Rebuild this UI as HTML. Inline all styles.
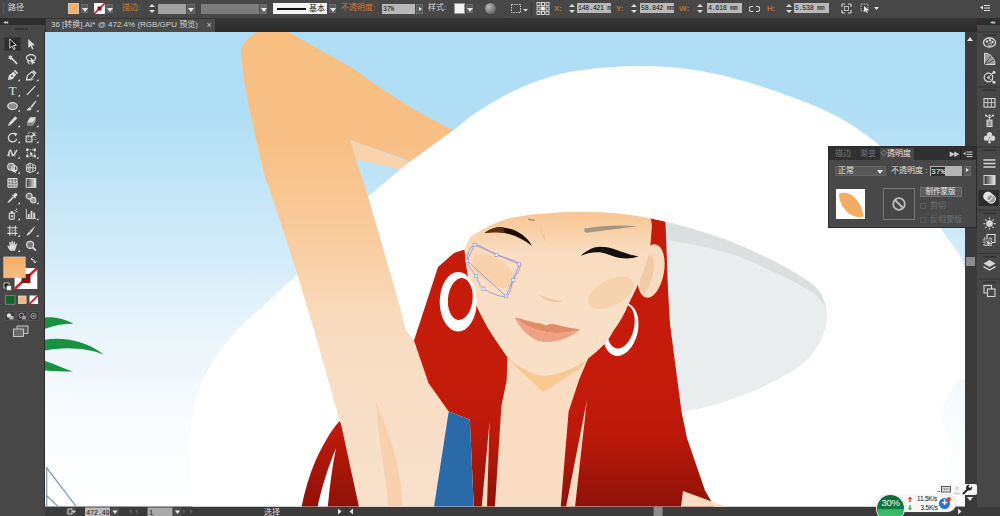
<!DOCTYPE html>
<html lang="zh">
<head>
<meta charset="utf-8">
<title>36 [转换].AI* @ 472.4% (RGB/GPU 预览)</title>
<style>
html,body{margin:0;padding:0;}
body{width:1000px;height:516px;overflow:hidden;background:#474747;position:relative;
 font-family:"Liberation Sans","Noto Sans CJK SC",sans-serif;font-size:9px;color:#d6d6d6;}
.abs{position:absolute;}
#art{position:absolute;left:0;top:0;}
.t{position:absolute;white-space:nowrap;line-height:1;}
.fld{position:absolute;background:#b9b9b9;color:#1a1a1a;font-family:"Liberation Mono","Noto Sans CJK SC",monospace;font-size:6.700px;letter-spacing:-0.350px;line-height:10px;white-space:nowrap;overflow:hidden;padding-left:1px;color:#111;box-sizing:border-box;}
.dd{position:absolute;background:#5a5a5a;border:1px solid #6a6a6a;box-sizing:border-box;}
.dd:after{content:"";position:absolute;left:50%;top:50%;margin:-1px 0 0 -3px;border:3px solid transparent;border-top:4px solid #e6e6e6;border-bottom:0;}
.or{color:#cf7d33;}
</style>
</head>
<body>

<!-- ================= ARTWORK ================= -->
<svg id="art" width="1000" height="516" viewBox="0 0 1000 516">
<defs>
 <clipPath id="cv"><rect x="45" y="32" width="920" height="474.5"/></clipPath>
 <linearGradient id="sky" x1="0" y1="32" x2="0" y2="506" gradientUnits="userSpaceOnUse">
  <stop offset="0" stop-color="#aeddf5"/><stop offset="0.165" stop-color="#afdef5"/><stop offset="0.31" stop-color="#c0e4f7"/><stop offset="0.475" stop-color="#d4ecf9"/><stop offset="0.64" stop-color="#eaf5fb"/><stop offset="0.81" stop-color="#f8fbfe"/><stop offset="1" stop-color="#ffffff"/>
 </linearGradient>
 <linearGradient id="arm" x1="0" y1="32" x2="0" y2="506" gradientUnits="userSpaceOnUse">
  <stop offset="0" stop-color="#f8bf81"/><stop offset="0.24" stop-color="#f8c086"/><stop offset="0.41" stop-color="#f8ca9a"/><stop offset="0.576" stop-color="#f8d8b8"/><stop offset="0.66" stop-color="#f8ddc2"/><stop offset="1" stop-color="#f8e0cb"/>
 </linearGradient>
 <linearGradient id="face" x1="0" y1="212" x2="0" y2="300" gradientUnits="userSpaceOnUse">
  <stop offset="0" stop-color="#f8c692"/><stop offset="0.45" stop-color="#f9dcbf"/><stop offset="1" stop-color="#f9dfc6"/>
 </linearGradient>
 <linearGradient id="hair" x1="0" y1="380" x2="0" y2="506" gradientUnits="userSpaceOnUse">
  <stop offset="0" stop-color="#c41b0a"/><stop offset="0.45" stop-color="#bb190a"/><stop offset="1" stop-color="#8f1209"/>
 </linearGradient>
</defs>
<g clip-path="url(#cv)">
 <rect x="45" y="32" width="920" height="475" fill="url(#sky)"/>
 <!-- palm leaves -->
 <path d="M45 317.400 C55 316.500 65 319 73.500 323.700 C64 323.500 54 325.500 45 328.700 Z" fill="#1a9140"/>
 <path d="M45 339.800 C52 338.500 60 338.400 68 339.500 C82 341.500 94 347 103.600 354.600 C92 349.500 80 348.500 68 348.200 C60 348.200 52 349.200 45 350.400 Z" fill="#1a9140"/>
 <path d="M45 361 C50 362.500 56 365 61 367 C65 368.800 69 370.500 73 371.600 C64 371.500 54 371.200 45 370.500 Z" fill="#1a9140"/>
 <!-- boat lines -->
 <path d="M46.700 467 L46.700 507 M46 467 L77 507.500 M47 496 L59 507.500" stroke="#86a0b2" stroke-width="1.300" fill="none"/>

 <!-- hat (white) -->
 <path id="hatw" d="M454.0 130.0 C458.3 126.7 469.0 117.0 480.0 110.0 C491.0 103.0 506.7 94.0 520.0 88.0 C533.3 82.0 546.7 77.3 560.0 74.0 C573.3 70.7 586.7 69.3 600.0 68.0 C613.3 66.7 626.7 66.0 640.0 66.0 C653.3 66.0 666.7 66.5 680.0 68.0 C693.3 69.5 706.7 71.8 720.0 74.8 C733.3 77.8 746.7 81.8 760.0 86.0 C773.3 90.2 786.7 94.7 800.0 100.0 C813.3 105.3 826.7 110.3 840.0 118.0 C853.3 125.7 867.5 134.7 880.0 146.0 C892.5 157.3 904.9 172.3 915.0 186.0 C925.1 199.7 933.1 216.5 940.5 228.0 C947.9 239.5 955.2 247.7 959.5 255.0 C963.8 262.3 964.9 269.2 966.0 272.0 L966 380 C964.7 380.0 961.0 377.0 958.0 380.0 C955.0 383.0 951.0 392.2 948.0 398.0 C945.0 403.8 940.3 409.7 940.0 415.0 C939.7 420.3 944.2 424.8 946.0 430.0 C947.8 435.2 950.5 440.7 951.0 446.0 C951.5 451.3 950.3 457.0 949.0 462.0 C947.7 467.0 944.2 468.5 943.0 476.0 C941.8 483.5 942.2 501.8 942.0 507.0 L192 507 C191.5 498.8 188.7 474.5 189.0 458.0 C189.3 441.5 190.5 423.4 194.0 408.0 C197.5 392.6 202.3 379.0 210.0 365.5 C217.7 352.0 230.9 337.1 240.0 327.0 C249.1 316.9 256.2 312.7 264.5 305.0 C272.8 297.3 284.1 286.3 290.0 281.0 C295.9 275.7 298.3 274.3 300.0 273.0 L368 196.500 Z" fill="#ffffff"/>
 <!-- gray under brim -->
 <path d="M667.0 221.8 C672.5 223.3 688.8 227.6 699.8 231.0 C710.8 234.4 721.8 238.1 733.0 242.5 C744.2 246.9 755.0 251.7 766.8 257.6 C778.6 263.5 794.7 272.1 803.6 277.9 C812.5 283.7 816.4 286.8 820.2 292.6 C824.0 298.4 826.2 305.4 826.5 312.8 C826.8 320.2 825.8 328.5 822.0 336.8 C818.2 345.1 812.8 354.5 803.6 362.5 C794.4 370.5 779.1 378.5 766.8 384.6 C754.5 390.8 741.1 395.5 730.0 399.4 C718.9 403.3 708.2 406.0 700.0 408.0 C691.8 410.0 684.2 411.0 681.0 411.6 L660 330 Z" fill="#dcdfdf"/>
 <path d="M667.0 240.0 C672.5 241.0 688.8 243.6 699.8 246.0 C710.8 248.4 721.8 250.7 733.0 254.5 C744.2 258.3 755.0 263.3 766.8 268.7 C778.6 274.1 794.9 282.0 803.6 287.0 C812.3 292.0 815.3 294.2 819.0 298.5 C822.7 302.8 825.5 306.6 826.0 313.0 C826.5 319.4 825.7 328.6 822.0 336.8 C818.3 345.1 812.8 354.5 803.6 362.5 C794.4 370.5 779.1 378.5 766.8 384.6 C754.5 390.8 741.1 395.5 730.0 399.4 C718.9 403.3 708.2 406.0 700.0 408.0 C691.8 410.0 684.2 411.0 681.0 411.6 L660 330 Z" fill="#eaeded"/>

 <!-- upper arm & forearm -->
 <path d="M258 32 C248 37 241 44 241 53 C242 62 243 72 244 80 L249.500 110 L256 140 L264.500 175 L276.500 210 L296 270 L314 330 L339.500 420 L357.500 507 L437 507 L449 411 L428 380.500 L415 341 L406 330 L399.500 305 L390.500 270 L381.500 240 L372.500 210 L362 178 L350 140 L410 161 L407 164 L453.500 130 L440 123.500 L410 107 L380 87.500 L350 66.500 L320 50 L288.500 32 Z" fill="url(#arm)"/>
 <path d="M350 140 L410.500 162.500 L400 169.200 L356.200 159.500 Z" fill="#f9d3ab"/>
 <!-- white hat over the arm -->
 <path d="M453.500 130 L407 164 L368 196.500 L399.500 305 L406 330 L415 341 L470 300 L700 180 L600 90 Z" fill="#ffffff"/>

 <!-- chest / neck skin -->
 <path d="M490 340 L600 340 L600 507 L480 507 Z" fill="#f9dcc1"/>
 <!-- neck shadow -->
 <path d="M507 357 C520 368 532 374 543.300 376 C560 374 574 368 586 360 L582 367 L543.300 391.700 L509.700 361 Z" fill="#f8c892"/>
 <!-- main hair -->
 <path d="M464.500 249.500 L454 253 L438 267 L414 340.500 L428.500 383 L448.700 411.600 L469.800 419.500 L473.800 507 L494.900 507 L501.400 406 L506.700 380 L507.300 357 L488 328 L476 304 Z" fill="url(#hair)"/>
 <path d="M489.600 420.800 L481.700 507 L487 507 Z" fill="#f9dcc1"/>
 <!-- right hair -->
 <path d="M649 218 L665.500 221.500 L668 290 L670 324 L681.500 411.600 L687 438 L705 490.500 L714.500 507 L560.700 507 L568.600 411.600 L579 380 L588.700 357 L605.800 342.500 L628 305 L640 240 Z" fill="url(#hair)"/>
 <path d="M587 399.800 L566 507 L575 507 Z" fill="#f9dcc1"/>
 <path d="M683 491 L727 507 L681 507 Z" fill="#f9dcc1"/>
 <!-- blue garment -->
 <path d="M448.700 411.600 L469.800 419.500 L473.800 507 L434 507 Z" fill="#2a6aa8"/>
 <!-- armpit fold -->
 <path d="M375.600 400.300 C379 408 382 416 384.600 423.800 C389 435 392.500 446 395.400 456 C399 470 401.500 488 402.600 507 L388.200 507 C387.500 495 386 484 384.600 474 C383 462 381 450 379.200 438 C378 426 377 413 375.600 400.300 Z" fill="#f7d1ad"/>

 <!-- right earring (behind face) -->
 <g transform="rotate(13 621 329)"><ellipse cx="621" cy="329.500" rx="17" ry="27" fill="#ffffff"/><ellipse cx="620.500" cy="326.500" rx="13" ry="22.500" fill="#c41b0a"/></g>
 <!-- ear -->
 <ellipse cx="651" cy="271" rx="13" ry="27" fill="#f9dcc0" transform="rotate(10 651 271)"/>
 <ellipse cx="647" cy="274" rx="6" ry="19" fill="#f1cba8" transform="rotate(12 647 274)"/>
 <!-- face -->
 <path d="M464.500 249.500 C466 270 470 290 476 304 C479 312 484 321 488 328 C494 338 501 348 507.300 357 C518 367 531 374 543.300 376 C558 375 572 369 584 361.700 C592 356 599 350 605.800 342.500 C609 339 611 335 613 331.600 C620 322 625 313 628 305 C636 290 645 270 650 250 L652 225 L649 210 L560 205 L480 215 Z" fill="url(#face)"/>
 <!-- nose -->
 <path d="M538.900 294.500 C545 298 554 300 563 301 C556 303.500 545 302 538.900 294.500 Z" fill="#f2c59b"/>
 <path d="M538.500 223 C542 229 544.500 236 546.500 243 C542.500 238 539.500 231 538.500 223 Z" fill="#f6c894"/><path d="M543 222 C546 227 548 232 549.500 238 C546.500 234 544 228 543 222 Z" fill="#f7cfa2"/>
 <!-- blush -->
 <ellipse cx="611" cy="292.700" rx="25" ry="13" fill="#f5d3ae" transform="rotate(-27 611 292.700)"/>
 <ellipse cx="493.500" cy="271" rx="24" ry="12.500" fill="#f7d2aa" transform="rotate(33 493.500 271)"/>
 <!-- lips -->
 <path d="M514.500 317.200 C522 319 530 321.500 536 323 C540 322.500 543 324.500 545.700 325.600 C549 324 552 323.500 555.300 324.400 C564 326.500 572 328.500 580.500 329.200 C570 333 556 334 545.700 331.700 C534 330 522 324 514.500 317.200 Z" fill="#e18b69"/>
 <path d="M514.500 317.200 C522 324 534 330 545.700 331.700 C556 334 570 333 580.500 329.200 C570 338 556 342.500 543.300 342 C531 340 520 329 514.500 317.200 Z" fill="#eea283"/>
 <!-- eyes -->
 <path d="M484.500 233 C490 228.500 497 226.800 503 227.500 C516 229 527 236 532 246 C524 239.500 514 234.500 503 232.800 C496 232 490 232.300 484.500 233 Z" fill="#1d0d06"/>
 <path d="M484.500 233 C490 228.500 497 226.800 503 227.500 L505 233.100 C496 232 490 232.300 484.500 233 Z" fill="#5c2e0e"/>
 <path d="M580.500 256 C587 250 594 246.800 600 246.800 C606 246.800 611 248 616 249.800 C623 252.300 630 255 638.500 256.500 C633 258.500 626 259 620 258 C613 256.800 607 253.500 600 252.300 C593 251.800 586 253.300 580.500 256 Z" fill="#14100e"/>
 <!-- brows -->
 <path d="M584.500 228.500 C600 225.800 620 224.800 637.400 226.200 C622 228.300 602 230.500 586 232.800 C584 232 583.800 230 584.500 228.500 Z" fill="#a39782"/>
 <path d="M528 218.500 L535 219.500 L534.500 221 L528 220 Z" fill="#a8967c"/>
 <!-- left earring -->
 <ellipse cx="458.200" cy="301.800" rx="18.500" ry="29.800" fill="#ffffff"/>
 <ellipse cx="460.300" cy="299" rx="12.300" ry="21" fill="#c41b0a" transform="rotate(6 460.300 299)"/>
 <!-- hat lower edge over the forehead -->
 <path d="M435 264 L457 247.200 C466 240 474 234 483.600 229 C492 224.500 500 221 510 218 C522 215.500 534 214 546 213.400 C558 212.300 570 212 582 212 C594 212 606 212.500 618 213.400 C629 214.500 640 216 649.400 218 L666 221.800 L700 180 L600 100 L420 160 Z" fill="#ffffff"/>
 <!-- selection outline -->
 <g fill="none" stroke="#8d8fdc" stroke-width="0.800">
  <path d="M474.5 244.8 L519.3 264.3 L506.0 296.3 L467.2 260.8 Z"/>
  <path d="M474.5 244.8 C479.4 243.8 489.0 251.6 496.5 254.8 C504.0 258.1 516.5 260.1 519.3 264.3 C522.1 268.5 515.5 274.7 513.3 280.0 C511.1 285.3 511.0 294.9 506.0 296.3 C501.0 297.8 488.4 292.1 483.4 288.7 C478.4 285.3 478.8 280.6 476.1 276.0 C473.4 271.4 467.5 266.0 467.2 260.8 C466.9 255.6 469.6 245.8 474.5 244.8 Z"/>
 </g>
 <g fill="#ffffff" stroke="#8d8fdc" stroke-width="0.700">
  <rect x="473.0" y="243.3" width="3" height="3"/><rect x="495.0" y="253.3" width="3" height="3"/><rect x="517.8" y="262.8" width="3" height="3"/><rect x="511.8" y="278.5" width="3" height="3"/><rect x="504.5" y="294.8" width="3" height="3"/><rect x="481.9" y="287.2" width="3" height="3"/><rect x="474.6" y="274.5" width="3" height="3"/><rect x="465.7" y="259.3" width="3" height="3"/>
 </g>
 <!-- hair left of arm -->
 <path d="M339.500 421 C330 432 322 446 315 462 C309 476 304.500 492 301.500 507 L359 507 L341 424 Z" fill="url(#hair)"/>
 <path d="M336 448 C329 465 322 486 317.500 507 L327.800 507 C329.500 488 332 468 336 448 Z" fill="#ffffff"/>
</g>
</svg>


<!-- ================= TOP CONTROL BAR ================= -->
<div class="abs" id="ctrl" style="left:0;top:0;width:1000px;height:18px;background:#474747;">
 <div class="abs" style="left:3px;top:3px;width:1px;height:11px;background:#5c5c5c;"></div>
 <span class="t" style="left:8px;top:4px;font-size:8px;color:#dadada;">路径</span>
 <div class="abs" style="left:68px;top:3px;width:11px;height:11px;background:#f6b06a;border:1px solid #c8c8c8;box-sizing:border-box;"></div>
 <div class="dd" style="left:81px;top:4px;width:7px;height:9px;"></div>
 <svg class="abs" style="left:94px;top:3px;" width="11" height="11" viewBox="0 0 11 11"><rect width="11" height="11" fill="#fff"/><path d="M0 11 L11 0" stroke="#d2202a" stroke-width="1.600"/><rect x="3.500" y="3.500" width="4" height="4" fill="#7a1a1a"/></svg>
 <div class="dd" style="left:106px;top:4px;width:7px;height:9px;"></div>
 <span class="t or" style="left:122px;top:4px;font-size:8px;">描边:</span>
 <div class="abs" style="left:149px;top:3px;width:6px;height:11px;"><div class="abs" style="left:0;top:1px;border:3px solid transparent;border-bottom:3px solid #ddd;border-top:0;"></div><div class="abs" style="left:0;top:7px;border:3px solid transparent;border-top:3px solid #ddd;border-bottom:0;"></div></div>
 <div class="abs" style="left:158px;top:4px;width:28px;height:10px;background:#a2a2a2;"></div>
 <div class="dd" style="left:187px;top:4px;width:8px;height:10px;"></div>
 <div class="abs" style="left:201px;top:4px;width:58px;height:10px;background:#7c7c7c;"></div>
 <div class="dd" style="left:260px;top:4px;width:7px;height:10px;background:#666;"></div>
 <div class="abs" style="left:273px;top:3px;width:54px;height:11px;background:#f4f4f4;"><div class="abs" style="left:3.500px;top:4.500px;width:29.500px;height:2px;background:#111;"></div><span class="t" style="left:36px;top:1.500px;font-size:8px;color:#222;">基本</span></div>
 <div class="dd" style="left:329px;top:4px;width:7px;height:9px;"></div>
 <span class="t or" style="left:341px;top:4px;font-size:8px;">不透明度:</span>
 <div class="fld" style="left:382px;top:4px;width:33px;height:10px;">37%</div>
 <div class="abs" style="left:416px;top:4px;width:7px;height:10px;background:#5a5a5a;border:1px solid #6a6a6a;box-sizing:border-box;"><div class="abs" style="left:1.500px;top:1.500px;border:2.500px solid transparent;border-left:3px solid #e6e6e6;border-right:0;"></div></div>
 <span class="t" style="left:428px;top:4px;font-size:8px;color:#dadada;">样式:</span>
 <div class="abs" style="left:454px;top:3px;width:11px;height:11px;background:#f2f2f2;border:1px solid #999;box-sizing:border-box;"></div>
 <div class="dd" style="left:466px;top:4px;width:7px;height:9px;"></div>
 <div class="abs" style="left:485px;top:3px;width:11px;height:11px;border-radius:50%;background:radial-gradient(circle at 35% 35%,#bbb,#6a6a6a 70%);"></div>
 <!-- align / transform -->
 <svg class="abs" style="left:510px;top:2px;" width="20" height="14" viewBox="0 0 20 14"><g fill="none" stroke="#cfcfcf" stroke-width="1" stroke-dasharray="1.500 1"><rect x="1.500" y="2.500" width="9" height="8"/></g><path d="M13 7 h5 l-2.500 2.500z" fill="#ddd"/></svg>
 <div class="abs" style="left:531px;top:2px;width:1px;height:14px;background:#3a3a3a;"></div>
 <svg class="abs" style="left:536px;top:1px;" width="14" height="15" viewBox="0 0 14 15"><g fill="#474747" stroke="#e2e2e2" stroke-width="0.900"><rect x="1" y="1.500" width="3" height="3"/><rect x="5.500" y="1.500" width="3" height="3"/><rect x="10" y="1.500" width="3" height="3"/><rect x="1" y="6" width="3" height="3"/><rect x="5.500" y="6" width="3" height="3" fill="#fff"/><rect x="10" y="6" width="3" height="3"/><rect x="1" y="10.500" width="3" height="3"/><rect x="5.500" y="10.500" width="3" height="3"/><rect x="10" y="10.500" width="3" height="3"/></g></svg>
 <span class="t or" style="left:554px;top:5px;font-size:8px;font-weight:bold;color:#b9722e;">X:</span>
 <div class="abs" style="left:569px;top:3px;width:6px;height:11px;"><div class="abs" style="left:0;top:1px;border:3px solid transparent;border-bottom:3px solid #ddd;border-top:0;"></div><div class="abs" style="left:0;top:7px;border:3px solid transparent;border-top:3px solid #ddd;border-bottom:0;"></div></div>
 <div class="fld" style="left:577px;top:3px;width:34px;height:10px;">148.421 m</div>
 <span class="t or" style="left:616px;top:5px;font-size:8px;font-weight:bold;color:#b9722e;">Y:</span>
 <div class="abs" style="left:631px;top:3px;width:6px;height:11px;"><div class="abs" style="left:0;top:1px;border:3px solid transparent;border-bottom:3px solid #ddd;border-top:0;"></div><div class="abs" style="left:0;top:7px;border:3px solid transparent;border-top:3px solid #ddd;border-bottom:0;"></div></div>
 <div class="fld" style="left:640px;top:3px;width:34px;height:10px;">58.842 mm</div>
 <span class="t or" style="left:679px;top:5px;font-size:8px;font-weight:bold;color:#b9722e;">W:</span>
 <div class="abs" style="left:697px;top:3px;width:6px;height:11px;"><div class="abs" style="left:0;top:1px;border:3px solid transparent;border-bottom:3px solid #ddd;border-top:0;"></div><div class="abs" style="left:0;top:7px;border:3px solid transparent;border-top:3px solid #ddd;border-bottom:0;"></div></div>
 <div class="fld" style="left:707px;top:3px;width:35px;height:10px;">4.618 mm</div>
 <svg class="abs" style="left:749px;top:4px;" width="11" height="10" viewBox="0 0 11 10"><path d="M4 2.500 h-1.500 a2.500 2.500 0 0 0 0 5 h1.500 M7 2.500 h1.500 a2.500 2.500 0 0 1 0 5 h-1.500" fill="none" stroke="#d8d8d8" stroke-width="1.100"/></svg>
 <span class="t or" style="left:767px;top:5px;font-size:8px;font-weight:bold;color:#b9722e;">H:</span>
 <div class="abs" style="left:786px;top:3px;width:6px;height:11px;"><div class="abs" style="left:0;top:1px;border:3px solid transparent;border-bottom:3px solid #ddd;border-top:0;"></div><div class="abs" style="left:0;top:7px;border:3px solid transparent;border-top:3px solid #ddd;border-bottom:0;"></div></div>
 <div class="fld" style="left:794px;top:3px;width:35px;height:10px;">5.538 mm</div>
 <svg class="abs" style="left:841px;top:3px;" width="11" height="11" viewBox="0 0 11 11"><path d="M1 1 l3 0 M1 1 l0 3 M10 1 l-3 0 M10 1 l0 3 M1 10 l3 0 M1 10 l0 -3 M10 10 l-3 0 M10 10 l0 -3" stroke="#d4d4d4" stroke-width="1.200" fill="none"/><rect x="3.500" y="3.500" width="4" height="4" fill="none" stroke="#d4d4d4" stroke-width="0.800"/></svg>
 <svg class="abs" style="left:860px;top:3px;" width="20" height="11" viewBox="0 0 20 11"><rect x="1" y="1" width="7" height="7" fill="none" stroke="#bdbdbd" stroke-dasharray="1.500 1"/><path d="M4 3 l5 4 -2.200 .3 1 2.200 -1 .5 -1 -2.200 -1.800 1.400z" fill="#e6e6e6"/><path d="M14 4 h5 l-2.500 3z" fill="#e6e6e6"/></svg>
 <svg class="abs" style="left:980px;top:4px;" width="11" height="9" viewBox="0 0 11 9"><path d="M0 3.500 l3 -2 v4z" fill="#ddd"/><path d="M4 1.500 h6 M4 4 h6 M4 6.500 h6" stroke="#ddd" stroke-width="1"/></svg>
</div>

<!-- ================= TAB BAR ================= -->
<div class="abs" style="left:0;top:18px;width:1000px;height:14px;background:linear-gradient(#363636,#2b2b2b);"></div>
<div class="abs" style="left:0;top:18px;width:45px;height:7px;background:#2e2e2e;"></div>
<div class="abs" style="left:0;top:25px;width:45px;height:7px;background:#474747;"></div>
<span class="t" style="left:3px;top:19px;font-size:6px;color:#bbb;letter-spacing:-1px;">◂◂</span>
<div class="abs" style="left:15px;top:28px;width:13px;height:2px;background:#353535;"></div>
<div class="abs" style="left:46px;top:19px;width:169px;height:13px;background:#4a4a4a;"></div>
<span class="t" style="left:51px;top:21px;font-size:8px;color:#d2d2d2;">36 [转换].AI* @ 472.4% (RGB/GPU 预览)</span>
<span class="t" style="left:206.500px;top:20.500px;font-size:9px;color:#c8c8c8;">×</span>

<!-- ================= LEFT TOOLBAR ================= -->
<div class="abs" id="tools" style="left:0;top:32px;width:44px;height:484px;background:#474747;"></div>
<div class="abs" style="left:44px;top:32px;width:1px;height:475px;background:#2b2b2b;"></div>

<svg class="abs" style="left:0;top:0;" width="45" height="516" viewBox="0 0 45 516">
<rect x="4.500" y="37.500" width="16" height="13" fill="#2e2e2e"/>
<g transform="translate(7.0 38.5) scale(0.92)"><path d="M3 0.500 L3 10.500 L5.500 8.200 L7.300 12 L8.800 11.300 L7 7.600 L10.200 7.400 Z" fill="#1a1a1a" stroke="#f0f0f0" stroke-width="0.900"/></g>
<g transform="translate(25.5 38.5) scale(0.92)"><path d="M3 0.500 L3 10.500 L5.500 8.200 L7.300 12 L8.800 11.300 L7 7.600 L10.200 7.400 Z" fill="#dcdcdc"/></g>
<g transform="translate(7.0 53.7) scale(0.92)"><path d="M4.500 4.500 L11 11" stroke="#dcdcdc" stroke-width="1.800"/><path d="M3.500 0.500 L4.200 2.700 L6.500 2 L5 3.800 L6.800 5.300 L4.500 5.200 L3.800 7.300 L3 5.200 L0.700 5.500 L2.500 3.900 L1 2 L3.200 2.700 Z" fill="#dcdcdc"/></g>
<g transform="translate(25.5 53.7) scale(0.92)"><ellipse cx="6" cy="4.500" rx="5" ry="3.500" fill="none" stroke="#dcdcdc" stroke-width="1.400"/><path d="M3 7 C2 9 3 10.500 4.500 11.500 M6 5 L10 10 L8 9.800 L7.200 11.500 Z" stroke="#dcdcdc" stroke-width="1" fill="#dcdcdc"/></g>
<g transform="translate(7.0 69.5) scale(0.92)"><path d="M1 11.500 L2 6.500 L7 2.500 L10 5.500 L6 10.500 Z" fill="#dcdcdc"/><path d="M8 1 L11.500 4.500" stroke="#dcdcdc" stroke-width="1.800"/><circle cx="5.500" cy="7" r="1" fill="#474747"/></g>
<path d="M20.0 79.0 l0 2.200 l-2.200 0 z" fill="#e8e8e8"/>
<g transform="translate(25.5 69.5) scale(0.92)"><path d="M1 11.500 L2 6.500 L7 2.500 L10 5.500 L6 10.500 Z" fill="none" stroke="#dcdcdc" stroke-width="1.200"/><path d="M8 1 L11.500 4.500" stroke="#dcdcdc" stroke-width="1.600"/><path d="M0.500 9 C2 12 6 12.500 9 10" stroke="#dcdcdc" fill="none" stroke-width="1"/></g>
<path d="M38.5 79.0 l0 2.200 l-2.200 0 z" fill="#e8e8e8"/>
<g transform="translate(7.0 84.8) scale(0.92)"><text x="6" y="11.300" text-anchor="middle" font-family="Liberation Serif, serif" font-size="14.500" fill="#dcdcdc">T</text></g>
<path d="M20.0 94.3 l0 2.200 l-2.200 0 z" fill="#e8e8e8"/>
<g transform="translate(25.5 84.8) scale(0.92)"><path d="M1.500 11 L10.500 1.500" stroke="#dcdcdc" stroke-width="1.300"/></g>
<path d="M38.5 94.3 l0 2.200 l-2.200 0 z" fill="#e8e8e8"/>
<g transform="translate(7.0 100.1) scale(0.92)"><ellipse cx="6" cy="6.500" rx="5.200" ry="3.800" fill="#8a8a8a" stroke="#dcdcdc" stroke-width="1.300"/></g>
<path d="M20.0 109.6 l0 2.200 l-2.200 0 z" fill="#e8e8e8"/>
<g transform="translate(25.5 100.1) scale(0.92)"><path d="M11 0.500 L5.500 7 L7 8.300 L11.800 1.300 Z" fill="#dcdcdc"/><path d="M5 7.600 C3 8 3 10 1 11 C3.500 12 6.500 11 6.600 9 Z" fill="#dcdcdc"/></g>
<path d="M38.5 109.6 l0 2.200 l-2.200 0 z" fill="#e8e8e8"/>
<g transform="translate(7.0 115.5) scale(0.92)"><path d="M9 0.800 L11.200 3 L4 10.200 L1 11.500 L2 8.200 Z" fill="#dcdcdc"/><path d="M2.500 8.500 L3.800 9.800" stroke="#474747" stroke-width="0.800"/></g>
<path d="M20.0 125.0 l0 2.200 l-2.200 0 z" fill="#e8e8e8"/>
<g transform="translate(25.5 115.5) scale(0.92)"><path d="M5 2 L11.500 2 L8 8 L1.500 8 Z" fill="#dcdcdc"/><path d="M1.500 8.600 L8 8.600 L8 11 L1.500 11 Z" fill="#9a9a9a"/><path d="M8 8.600 L11.500 2.600 L11.500 5 L8 11 Z" fill="#b5b5b5"/></g>
<path d="M38.5 125.0 l0 2.200 l-2.200 0 z" fill="#e8e8e8"/>
<g transform="translate(7.0 131.5) scale(0.92)"><path d="M9.800 4 A4.600 4.600 0 1 0 10.500 8" fill="none" stroke="#dcdcdc" stroke-width="1.400"/><path d="M7.500 1 L11.500 2.500 L9 5.500 Z" fill="#dcdcdc"/></g>
<path d="M20.0 141.0 l0 2.200 l-2.200 0 z" fill="#e8e8e8"/>
<g transform="translate(25.5 131.5) scale(0.92)"><rect x="0.700" y="5" width="6.300" height="6.300" fill="none" stroke="#dcdcdc" stroke-width="1.200"/><rect x="3" y="1" width="8.300" height="8" fill="none" stroke="#dcdcdc" stroke-width="0.800" stroke-dasharray="1.200 1"/><path d="M5.500 7 L9.500 3 M9.800 2.500 l0 2.700 M9.800 2.500 l-2.700 0" stroke="#dcdcdc" stroke-width="1.100"/></g>
<path d="M38.5 141.0 l0 2.200 l-2.200 0 z" fill="#e8e8e8"/>
<g transform="translate(7.0 147.0) scale(0.92)"><path d="M1 10 C3 2 4 2 5 6 C6 10 7.500 10 11 3" fill="none" stroke="#dcdcdc" stroke-width="1.500"/><path d="M2.500 4 L2.500 11 M8.500 3.500 L8.500 10.500" stroke="#dcdcdc" stroke-width="0.800"/><circle cx="6" cy="9" r="1.200" fill="#dcdcdc"/></g>
<path d="M20.0 156.5 l0 2.200 l-2.200 0 z" fill="#e8e8e8"/>
<g transform="translate(25.5 147.0) scale(0.92)"><rect x="2" y="3" width="8" height="7" fill="none" stroke="#dcdcdc" stroke-width="0.900" stroke-dasharray="1.400 1"/><g fill="#dcdcdc"><rect x="0.700" y="1.700" width="2.600" height="2.600"/><rect x="8.700" y="1.700" width="2.600" height="2.600"/><rect x="0.700" y="8.700" width="2.600" height="2.600"/><rect x="8.700" y="8.700" width="2.600" height="2.600"/></g><path d="M5 5 l3.500 3 -1.600 .1 .7 1.600 -.8 .3 -.7 -1.600 -1.100 1z" fill="#dcdcdc"/></g>
<path d="M38.5 156.5 l0 2.200 l-2.200 0 z" fill="#e8e8e8"/>
<g transform="translate(7.0 162.1) scale(0.92)"><circle cx="4.500" cy="5" r="3.800" fill="#8a8a8a" stroke="#dcdcdc" stroke-width="1.100"/><circle cx="8" cy="7" r="3" fill="none" stroke="#dcdcdc" stroke-width="1.100"/><path d="M6 6 l5 3.800 -2 .2 .9 1.800 -.9 .4 -.9 -1.900 -1.500 1.200z" fill="#dcdcdc"/></g>
<path d="M20.0 171.6 l0 2.200 l-2.200 0 z" fill="#e8e8e8"/>
<g transform="translate(25.5 162.1) scale(0.92)"><path d="M1 3 L5 1 L5 11.500 L1 10 Z M5 1 L11 4 L11 9 L5 11.500 M1 6.500 L5 6 L11 6.500 M3 2 L3 10.800 M8 2.500 L8 10.300" fill="none" stroke="#dcdcdc" stroke-width="1"/></g>
<path d="M38.5 171.6 l0 2.200 l-2.200 0 z" fill="#e8e8e8"/>
<g transform="translate(7.0 177.2) scale(0.92)"><rect x="1" y="1.500" width="10" height="9.500" rx="1" fill="#777" stroke="#dcdcdc" stroke-width="1.100"/><path d="M1 5 C4 3.500 8 6.500 11 5 M1 8 C4 6.500 8 9.500 11 8 M4.300 1.500 C3.300 5 5.300 8 4.300 11 M7.800 1.500 C6.800 5 8.800 8 7.800 11" stroke="#dcdcdc" stroke-width="0.900" fill="none"/></g>
<g transform="translate(25.5 177.2) scale(0.92)"><defs><linearGradient id="tg" x1="0" x2="1"><stop offset="0" stop-color="#333"/><stop offset="1" stop-color="#f2f2f2"/></linearGradient></defs><rect x="0.800" y="1.500" width="10.400" height="9.500" fill="url(#tg)" stroke="#dcdcdc" stroke-width="1.100"/></g>
<g transform="translate(7.0 192.5) scale(0.92)"><path d="M8.500 0.800 C10 -0.200 12 1.800 11 3.300 L9.200 5 L9.800 5.600 L8.800 6.600 L5.400 3.200 L6.400 2.200 L7 2.800 Z" fill="#dcdcdc"/><path d="M6.200 4.500 L7.500 5.800 L3 10.300 L1 11.300 L0.700 11 L1.700 9 Z" fill="#dcdcdc"/></g>
<path d="M20.0 202.0 l0 2.200 l-2.200 0 z" fill="#e8e8e8"/>
<g transform="translate(25.5 192.5) scale(0.92)"><circle cx="4" cy="4" r="3.200" fill="#777" stroke="#dcdcdc" stroke-width="1.100"/><circle cx="8.300" cy="8.300" r="3" fill="#999" stroke="#dcdcdc" stroke-width="1.100"/><path d="M5 7 C6 6.500 7 6 7.500 5" stroke="#dcdcdc" fill="none" stroke-width="0.900"/></g>
<path d="M38.5 202.0 l0 2.200 l-2.200 0 z" fill="#e8e8e8"/>
<g transform="translate(7.0 208.5) scale(0.92)"><rect x="2.500" y="5" width="5.500" height="6.500" rx="1" fill="none" stroke="#dcdcdc" stroke-width="1.200"/><rect x="4" y="2.800" width="2.500" height="2.200" fill="#dcdcdc"/><circle cx="5.300" cy="8.300" r="1.200" fill="#dcdcdc"/><g fill="#dcdcdc"><circle cx="9" cy="2" r=".700"/><circle cx="10.800" cy="3.500" r=".700"/><circle cx="10.500" cy="0.800" r=".700"/><circle cx="8.500" cy="4" r=".600"/></g></g>
<path d="M20.0 218.0 l0 2.200 l-2.200 0 z" fill="#e8e8e8"/>
<g transform="translate(25.5 208.5) scale(0.92)"><path d="M1 0.500 V11 H11.500" fill="none" stroke="#dcdcdc" stroke-width="1"/><rect x="2.500" y="6" width="2" height="4.500" fill="#dcdcdc"/><rect x="5.500" y="2.500" width="2" height="8" fill="#dcdcdc"/><rect x="8.500" y="4.500" width="2" height="6" fill="#dcdcdc"/></g>
<path d="M38.5 218.0 l0 2.200 l-2.200 0 z" fill="#e8e8e8"/>
<g transform="translate(7.0 225.1) scale(0.92)"><path d="M3 0.500 V11.500 M9 0.500 V11.500 M0.500 3 H11.500 M0.500 9 H11.500" stroke="#dcdcdc" stroke-width="1.100" fill="none"/><path d="M6 0.500 V11.500 M0.500 6 H11.500" stroke="#9a9a9a" stroke-width="0.700" fill="none"/></g>
<path d="M20.0 234.6 l0 2.200 l-2.200 0 z" fill="#e8e8e8"/>
<g transform="translate(25.5 225.1) scale(0.92)"><path d="M11 0.800 L4.500 6.300 L6.500 8 Z" fill="#dcdcdc"/><path d="M4.200 6.800 L6 8.500 L2 11.500 L1.200 10.800 Z" fill="#dcdcdc"/></g>
<path d="M38.5 234.6 l0 2.200 l-2.200 0 z" fill="#e8e8e8"/>
<g transform="translate(7.0 240.2) scale(0.92)"><path d="M3.500 11.500 C2 9.500 1 8 0.500 6.500 C0.500 5.500 1.700 5.500 2.300 6.500 L3 7.500 L2.500 2.500 C2.500 1.500 3.800 1.500 4 2.500 L4.500 5.500 L4.800 1.300 C4.900 .3 6.200 .3 6.300 1.300 L6.400 5.500 L7.400 2 C7.700 1 8.900 1.300 8.800 2.300 L8.200 6 L9.500 4 C10 3.200 11.100 3.700 10.800 4.700 L9.500 9 C9.200 10 8.800 11 8.500 11.500 Z" fill="#dcdcdc"/></g>
<path d="M20.0 249.7 l0 2.200 l-2.200 0 z" fill="#e8e8e8"/>
<g transform="translate(25.5 240.2) scale(0.92)"><circle cx="5" cy="5" r="3.800" fill="#777" stroke="#dcdcdc" stroke-width="1.400"/><path d="M7.800 7.800 L11.300 11.300" stroke="#dcdcdc" stroke-width="2"/></g>
<defs><linearGradient id="fs" x1="0" y1="0" x2="0" y2="1"><stop offset="0" stop-color="#f4ab62"/><stop offset="1" stop-color="#f7bd82"/></linearGradient></defs>
<rect x="14.600" y="268" width="22.700" height="21" fill="#ffffff"/><path d="M14.600 289 L37.300 268" stroke="#d2202a" stroke-width="2.400"/><rect x="21.500" y="274" width="9" height="9" fill="#7d1717" stroke="#fff" stroke-width="0"/>
<rect x="3.800" y="257" width="21.400" height="20.700" fill="url(#fs)" stroke="#c9c9c9" stroke-width="0.800"/>
<path d="M31 259 q4 0 4 4 M35 263 l-1.500 -1.800 M35 263 l1.500 -1.800 M31 259 l1.800 -1.500 M31 259 l1.800 1.500" stroke="#d8d8d8" stroke-width="0.900" fill="none"/>
<rect x="4" y="283" width="5" height="5" fill="#1a1a1a" stroke="#ddd" stroke-width="0.800"/><rect x="6.500" y="285.500" width="5" height="5" fill="#fff" stroke="#333" stroke-width="0.600"/>
<rect x="5.500" y="295.300" width="9.500" height="9" fill="#14632c" stroke="#8a8a8a" stroke-width="0.800"/>
<rect x="18.600" y="296" width="7.500" height="7.500" fill="#f6b57a" stroke="#e8e8e8" stroke-width="0.700"/>
<rect x="29.500" y="295.500" width="8.500" height="8.500" fill="#fff"/><path d="M29.500 304 L38 295.500" stroke="#d2202a" stroke-width="1.800"/>
<rect x="5" y="311.700" width="10" height="9" fill="#3a3a3a" stroke="#5e5e5e" stroke-width="0.700"/>
<rect x="17" y="311.700" width="10" height="9" fill="#3a3a3a" stroke="#5e5e5e" stroke-width="0.700"/>
<rect x="29" y="311.700" width="10" height="9" fill="#3a3a3a" stroke="#5e5e5e" stroke-width="0.700"/>
<circle cx="9" cy="315.500" r="2.200" fill="#ddd"/><rect x="9.500" y="316" width="4" height="3.500" fill="#bbb"/>
<circle cx="21.500" cy="315.500" r="2.400" fill="none" stroke="#aaa" stroke-width="0.900"/><rect x="22" y="316" width="4" height="3.500" fill="#999"/>
<circle cx="33.500" cy="316" r="2.600" fill="none" stroke="#aaa" stroke-width="0.900"/><circle cx="33.500" cy="316" r="1" fill="#aaa"/>
<rect x="17" y="326" width="11" height="7.500" fill="#5a5a5a" stroke="#d0d0d0" stroke-width="0.900"/><rect x="13.500" y="329" width="10" height="7.500" fill="#6a6a6a" stroke="#d0d0d0" stroke-width="0.900"/>
</svg>

<!-- ================= RIGHT SCROLLBAR + DOCK ================= -->
<div class="abs" style="left:965px;top:32px;width:11.500px;height:484px;background:#3b3b3b;"></div>
<div class="abs" style="left:966px;top:256.500px;width:9px;height:9.500px;background:#8c8c8c;"></div>
<div class="abs" style="left:967px;top:37px;border:3.500px solid transparent;border-bottom:4px solid #e4e4e4;border-top:0;"></div>
<div class="abs" style="left:976.500px;top:18px;width:23.500px;height:498px;background:#474747;"></div>
<div class="abs" style="left:976.500px;top:18px;width:23.500px;height:7px;background:#2e2e2e;"></div>
<span class="t" style="left:990px;top:18.500px;font-size:6px;color:#bbb;letter-spacing:-1px;">◂◂</span>

<!-- ================= STATUS BAR ================= -->
<div class="abs" id="status" style="left:0;top:506.500px;width:1000px;height:9.500px;background:#3b3b3b;"></div>
<div class="abs" style="left:0;top:506.500px;width:45px;height:9.500px;background:#474747;"></div>
<svg class="abs" style="left:976px;top:0;" width="24" height="516" viewBox="976 0 24 516">
<rect x="978.500" y="190" width="20.500" height="16" fill="#2c2c2c"/>
<rect x="977" y="31.5" width="23" height="1" fill="#353535"/><rect x="983" y="34.5" width="13" height="1.500" fill="#333"/>
<rect x="977" y="86.5" width="23" height="1" fill="#353535"/><rect x="983" y="89.5" width="13" height="1.500" fill="#333"/>
<rect x="977" y="146.5" width="23" height="1" fill="#353535"/><rect x="983" y="149.5" width="13" height="1.500" fill="#333"/>
<rect x="977" y="209.6" width="23" height="1" fill="#353535"/><rect x="983" y="212.6" width="13" height="1.500" fill="#333"/>
<rect x="977" y="253.0" width="23" height="1" fill="#353535"/><rect x="983" y="256.0" width="13" height="1.500" fill="#333"/>
<rect x="977" y="278.6" width="23" height="1" fill="#353535"/><rect x="983" y="281.6" width="13" height="1.500" fill="#333"/>
<g transform="translate(983 36.0)"><ellipse cx="6.500" cy="6.500" rx="6" ry="4.500" fill="none" stroke="#d6d6d6" stroke-width="1.300"/><circle cx="4" cy="5.500" r="1.200" fill="#d6d6d6"/><circle cx="7" cy="4.300" r="1.200" fill="#d6d6d6"/><circle cx="9.500" cy="6" r="1.200" fill="#d6d6d6"/><circle cx="7" cy="8.500" r="1.500" fill="#474747" stroke="#d6d6d6" stroke-width="0.800"/></g>
<g transform="translate(983 52.5)"><path d="M1.500 0.500 V12 H12 C12 6 7.500 1 1.500 0.500 Z" fill="#9a9a9a" stroke="#d6d6d6" stroke-width="1"/><path d="M1.500 12 L8 3.500 M1.500 12 L11 7.500" stroke="#474747" stroke-width="0.900"/></g>
<g transform="translate(983 70.5)"><circle cx="5.500" cy="7" r="4.300" fill="none" stroke="#d6d6d6" stroke-width="1.200"/><circle cx="5.500" cy="7" r="1.300" fill="#d6d6d6"/><path d="M6.500 6 L11 1.500 M6.500 8 L11 12" stroke="#d6d6d6" stroke-width="1"/><circle cx="11" cy="1.800" r="1.500" fill="#d6d6d6"/><circle cx="11" cy="11.800" r="1.500" fill="#d6d6d6"/></g>
<g transform="translate(983 96.1)"><rect x="1" y="2.500" width="11" height="8.500" fill="none" stroke="#d6d6d6" stroke-width="1.100"/><path d="M1 6.500 H12 M4.700 2.500 V11 M8.400 2.500 V11" stroke="#d6d6d6" stroke-width="0.900"/></g>
<g transform="translate(983 114.1)"><rect x="4" y="6" width="5" height="6.500" fill="#999" stroke="#d6d6d6" stroke-width="1"/><path d="M6.500 6 V2.500 M6.500 4 L3.500 1.500 M6.500 4 L9.500 1.500" stroke="#d6d6d6" stroke-width="1"/><circle cx="3" cy="1.500" r="1.100" fill="#d6d6d6"/><circle cx="10" cy="1.500" r="1.100" fill="#d6d6d6"/><circle cx="6.500" cy="1.500" r="1.100" fill="#d6d6d6"/></g>
<g transform="translate(983 131.2)"><circle cx="6.500" cy="3.500" r="2.600" fill="#d6d6d6"/><circle cx="3.500" cy="7" r="2.600" fill="#d6d6d6"/><circle cx="9.500" cy="7" r="2.600" fill="#d6d6d6"/><path d="M6.500 6 L5 12 H8 Z" fill="#d6d6d6"/></g>
<g transform="translate(983 157.0)"><path d="M0.500 3 H12.500 M0.500 6.500 H12.500 M0.500 10 H12.500" stroke="#d6d6d6" stroke-width="1.600"/></g>
<g transform="translate(983 173.5)"><defs><linearGradient id="dg" x1="0" x2="1"><stop offset="0" stop-color="#2a2a2a"/><stop offset="1" stop-color="#f0f0f0"/></linearGradient></defs><rect x="1" y="2" width="11" height="9" fill="url(#dg)" stroke="#d6d6d6" stroke-width="1"/></g>
<g transform="translate(983 190.9)"><circle cx="5" cy="5.500" r="4.300" fill="#e2e2e2"/><circle cx="8.200" cy="8" r="4.300" fill="#9a9a9a" stroke="#f0f0f0" stroke-width="1"/><circle cx="5" cy="5.500" r="4.300" fill="none" stroke="#f0f0f0" stroke-width="1"/></g>
<g transform="translate(983 217.1)"><circle cx="6.500" cy="6.500" r="3.300" fill="#d6d6d6"/><g stroke="#d6d6d6" stroke-width="1.100"><path d="M6.500 0.500 V2.300 M6.500 10.700 V12.500 M0.500 6.500 H2.300 M10.700 6.500 H12.500 M2.300 2.300 L3.500 3.500 M9.500 9.500 L10.700 10.700 M2.300 10.700 L3.500 9.500 M9.500 3.500 L10.700 2.300"/></g></g>
<g transform="translate(983 233.5)"><rect x="4" y="1" width="8" height="8" fill="none" stroke="#d6d6d6" stroke-width="1.100"/><rect x="1" y="4.500" width="7.500" height="7.500" fill="#6a6a6a" stroke="#d6d6d6" stroke-width="1.100" stroke-dasharray="1.500 1"/><path d="M4 7 l4 3 -1.600 .2 .7 1.500 -.8 .3 -.7 -1.500 -1.200 .9z" fill="#d6d6d6"/></g>
<g transform="translate(983 259.1)"><path d="M6.500 1 L12.500 4.500 L6.500 8 L0.500 4.500 Z" fill="#d6d6d6"/><path d="M0.500 7.500 L6.500 11 L12.500 7.500" fill="none" stroke="#d6d6d6" stroke-width="1.300"/></g>
<g transform="translate(983 284.5)"><rect x="1" y="1" width="7.500" height="7.500" fill="none" stroke="#d6d6d6" stroke-width="1.100"/><rect x="4.500" y="4.500" width="7.500" height="7.500" fill="#474747" stroke="#d6d6d6" stroke-width="1.100"/></g>
</svg>
<!-- status bar contents -->
<svg class="abs" style="left:45px;top:506px;" width="920" height="10" viewBox="45 506 920 10">
 <rect x="66" y="507.500" width="10" height="8" fill="#4a4a4a"/><path d="M68 509 h4 v5 h-4z M72 511.500 h3 M75 511.500 l-1.500 -1.500 M75 511.500 l-1.500 1.500" fill="none" stroke="#ddd" stroke-width="0.900"/>
 <rect x="85" y="507.500" width="25" height="8.500" fill="#bcbcbc"/>
 <rect x="111" y="507.500" width="8" height="8.500" fill="#4e4e4e"/><path d="M112.500 510.500 h5 l-2.500 3.500z" fill="#f0f0f0"/>
 <g fill="#5c5c5c"><path d="M128 509 v5 M129 511.500 l3 -2.500 v5z M138 509 l-3 2.500 3 2.500z"/><path d="M183 509 l3 2.500 -3 2.500z M190 509 l3 2.500 -3 2.500z M194 509 v5"/></g>
 <rect x="147.500" y="507.500" width="25" height="8.500" fill="#a9a9a9"/>
 <rect x="173.500" y="507.500" width="8" height="8.500" fill="#4e4e4e"/><path d="M175 510.500 h5 l-2.500 3.500z" fill="#f0f0f0"/>
 <text x="86" y="514.500" font-family="Liberation Mono, monospace" font-size="7" letter-spacing="-0.300" fill="#1a1a1a">472.49</text>
 <text x="149" y="514.500" font-family="Liberation Mono, monospace" font-size="7" fill="#1a1a1a">1</text>
 <text x="264" y="514.500" font-family="Liberation Sans, Noto Sans CJK SC, sans-serif" font-size="8" fill="#d8d8d8">选择</text>
 <path d="M338 508.500 l3.500 3 -3.500 3z" fill="#e6e6e6"/><path d="M353 508.500 l-3.500 3 3.500 3z" fill="#e6e6e6"/>
 <rect x="345.500" y="507" width="1" height="9" fill="#2a2a2a"/>
 <rect x="354" y="507.500" width="570" height="8.500" fill="#3b3b3b"/>
 <rect x="653.600" y="507" width="9" height="9" fill="#8c8c8c"/>
 <path d="M958 508.500 l3.500 3 -3.500 3z" fill="#e6e6e6"/>
</svg>
<div class="abs" style="left:967px;top:497px;border:3.500px solid transparent;border-top:4px solid #e4e4e4;border-bottom:0;"></div>

<!-- ================= TRANSPARENCY PANEL ================= -->
<div class="abs" id="panel" style="left:829px;top:147px;width:146.500px;height:79.500px;background:#484848;box-shadow:0 0 0 1px #2c2c2c;">
 <div class="abs" style="left:0;top:0;width:146.500px;height:13px;background:#303030;"></div>
 <div class="abs" style="left:50.500px;top:1px;width:34px;height:12px;background:#484848;"></div>
 <span class="t" style="left:6px;top:3px;font-size:8px;color:#777;">描边</span>
 <span class="t" style="left:31px;top:3px;font-size:8px;color:#777;">渐变</span>
 <span class="t" style="left:52px;top:3px;font-size:8px;color:#e2e2e2;"><span style="font-size:6px;vertical-align:1px;">◇</span>透明度</span>
 <span class="t" style="left:120px;top:3.500px;font-size:6px;color:#ccc;letter-spacing:-1.500px;">▶▶</span>
 <div class="abs" style="left:131px;top:1px;width:1px;height:11px;background:#1f1f1f;"></div>
 <svg class="abs" style="left:134px;top:4px;" width="10" height="7" viewBox="0 0 10 7"><path d="M0 2.500 l2.500 -1.500 v3z" fill="#ccc"/><path d="M3.500 1 h6 M3.500 3.300 h6 M3.500 5.600 h6" stroke="#ccc" stroke-width="1"/></svg>
 <div class="abs" style="left:5.500px;top:18.500px;width:51px;height:10.500px;background:#575757;border:1px solid #636363;box-sizing:border-box;"></div>
 <span class="t" style="left:9px;top:19.500px;font-size:8px;color:#e0e0e0;">正常</span>
 <div class="abs" style="left:48px;top:22.500px;border:3px solid transparent;border-top:4px solid #eaeaea;border-bottom:0;"></div>
 <span class="t" style="left:62px;top:19.500px;font-size:8px;color:#e0e0e0;">不透明度 :</span>
 <div class="abs" style="left:101px;top:18.500px;width:32px;height:10.500px;background:#b4b4b4;"></div>
 <span class="t" style="left:102px;top:19.500px;font-size:8px;font-family:'Liberation Mono',monospace;background:#2f2f2f;color:#f2f2f2;line-height:9px;">37%</span>
 <div class="abs" style="left:134.500px;top:18.500px;width:7.500px;height:10.500px;background:#5a5a5a;border:1px solid #6a6a6a;box-sizing:border-box;"><div class="abs" style="left:1.800px;top:1.700px;border:2.500px solid transparent;border-left:3px solid #e6e6e6;border-right:0;"></div></div>
 <div class="abs" style="left:6.500px;top:41.800px;width:29.500px;height:30.200px;background:#ffffff;"></div>
 <svg class="abs" style="left:6.500px;top:41.800px;" width="30" height="31" viewBox="0 0 30 31"><path d="M3 4.500 C14 0.500 26 12 27.500 27.500 C15 31 3 18 3 4.500 Z" fill="#f4ab62"/></svg>
 <div class="abs" style="left:53.500px;top:41px;width:32px;height:32px;border:1px solid #7a7a7a;box-sizing:border-box;background:#464646;"></div>
 <svg class="abs" style="left:61.500px;top:49px;" width="16" height="16" viewBox="0 0 16 16"><circle cx="8" cy="8" r="5.800" fill="none" stroke="#bdbdbd" stroke-width="1.800"/><path d="M4 4 L12 12" stroke="#bdbdbd" stroke-width="1.800"/></svg>
 <div class="abs" style="left:91px;top:40px;width:41.500px;height:9.500px;background:#5c5c5c;border:1px solid #707070;box-sizing:border-box;"></div>
 <span class="t" style="left:96.500px;top:41px;font-size:7.500px;color:#eaeaea;">制作蒙版</span>
 <div class="abs" style="left:90.500px;top:55.500px;width:6.500px;height:6.500px;border:1px solid #5a5a5a;box-sizing:border-box;"></div>
 <span class="t" style="left:101px;top:54.500px;font-size:8px;color:#6e6e6e;">剪切</span>
 <div class="abs" style="left:90.500px;top:69.500px;width:6.500px;height:6.500px;border:1px solid #5a5a5a;box-sizing:border-box;"></div>
 <span class="t" style="left:101px;top:68.500px;font-size:8px;color:#6e6e6e;">反相蒙版</span>
</div>

<!-- ================= FLOATING WIDGET ================= -->
<div class="abs" style="left:937px;top:484px;width:39.500px;height:11px;background:#f7f7f7;border-radius:2px;"></div>
<svg class="abs" style="left:937px;top:485px;" width="14" height="9" viewBox="0 0 14 9"><rect x="4.500" y="1.500" width="9" height="5.500" fill="none" stroke="#333" stroke-width="0.800"/><path d="M5.500 3.200 h7 M5.500 4.800 h7 M0.500 6.500 h3" stroke="#333" stroke-width="0.800" stroke-dasharray="1 0.600"/></svg>
<svg class="abs" style="left:952px;top:484.500px;" width="10" height="10" viewBox="0 0 10 10"><circle cx="5" cy="3.500" r="2" fill="#d8d8d8"/><path d="M1.500 9.500 C1.500 6 8.500 6 8.500 9.500Z" fill="#d8d8d8"/></svg>
<svg class="abs" style="left:962px;top:484px;" width="11" height="11" viewBox="0 0 11 11"><path d="M1.500 9.500 L6 5" stroke="#222" stroke-width="2" stroke-linecap="round"/><path d="M9.800 2.300 A3 3 0 1 1 7.700 0.600 L6.300 2.800 L8 4.300 Z" fill="#222"/></svg>
<div class="abs" style="left:878px;top:494.500px;width:78px;height:17.500px;background:#f6f6f6;border-radius:9px;box-shadow:0 0 1px #999;"></div>
<div class="abs" style="left:876.500px;top:494.500px;width:27px;height:27px;border-radius:50%;background:linear-gradient(#0d6b3d 0%,#0f7a45 52%,#35b765 54%,#3fc873 100%);box-shadow:0 0 0 1px #e8f2ea;"></div>
<span class="t" style="left:881.500px;top:497.500px;font-size:9.500px;color:#f4fff6;letter-spacing:-0.300px;">30%</span>
<svg class="abs" style="left:907px;top:496px;" width="6" height="16" viewBox="0 0 6 16"><path d="M3 0.500 L5.200 3 H3.700 V6 H2.300 V3 H0.800 Z" fill="#d8402e"/><path d="M3 14.500 L5.200 12 H3.700 V9 H2.300 V12 H0.800 Z" fill="#3fae52"/></svg>

<span class="t" style="left:917px;top:496px;font-size:6.500px;color:#222;letter-spacing:-0.200px;">11.5K/s</span>
<span class="t" style="left:920.500px;top:504.500px;font-size:6.500px;color:#222;letter-spacing:-0.200px;">3.5K/s</span>
<div class="abs" style="left:939px;top:497.500px;width:11px;height:11px;border-radius:50%;background:#2e6fd0;"></div>
<span class="t" style="left:941.500px;top:498px;font-size:10px;color:#fff;font-weight:bold;">+</span>
<div class="abs" style="left:946.500px;top:496.500px;width:4px;height:4px;border-radius:50%;background:#e0412f;"></div>
</body>
</html>
